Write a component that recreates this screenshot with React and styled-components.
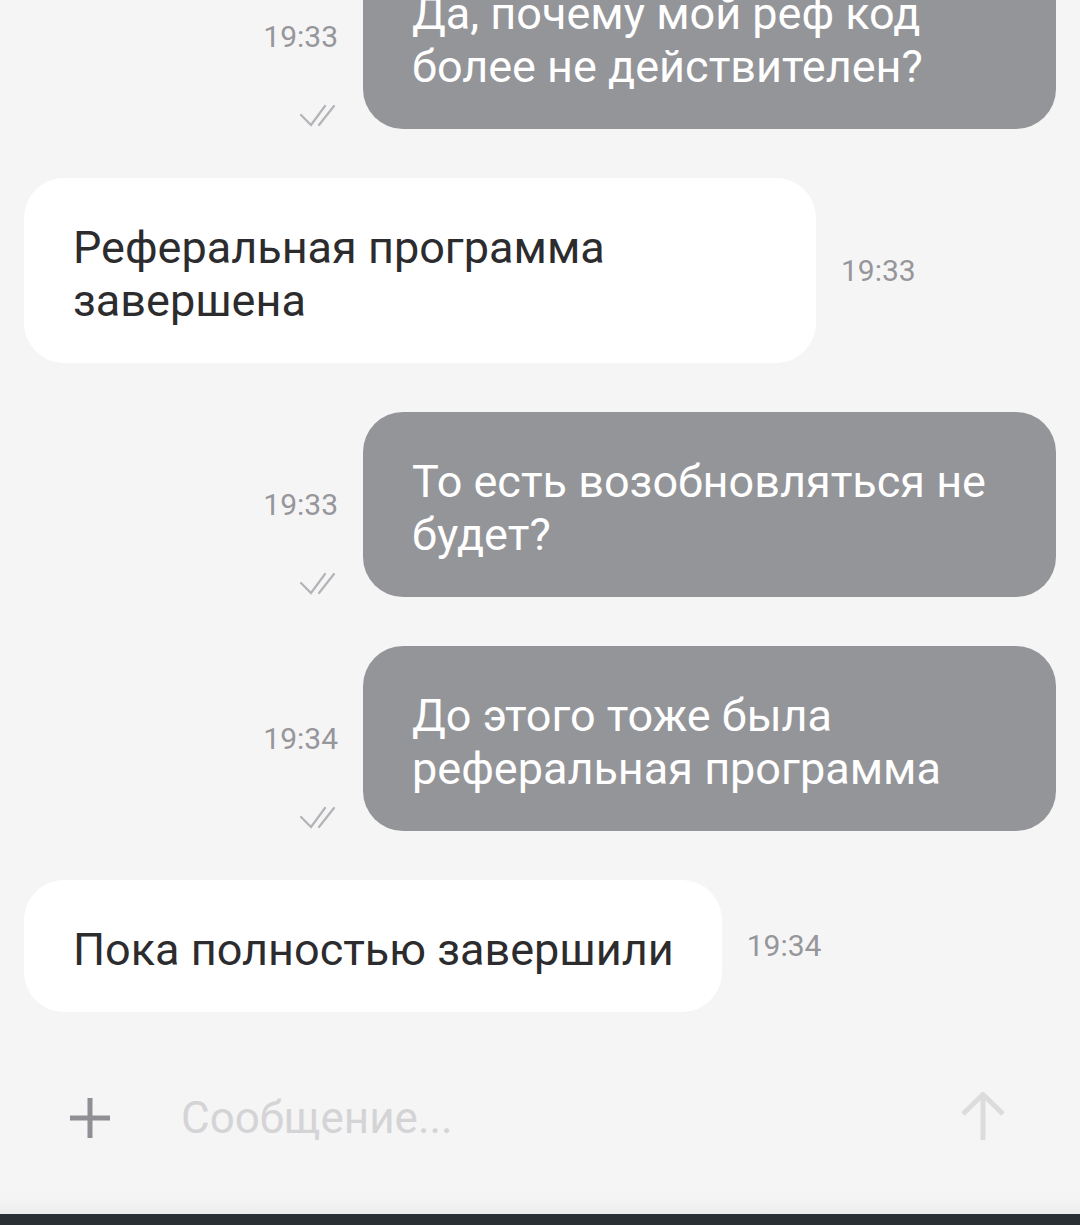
import React from 'react'
import styled, { createGlobalStyle } from 'styled-components'

const GlobalStyle = createGlobalStyle`
  html, body {
    margin: 0;
    padding: 0;
    background: #f5f5f5;
  }
  body {
    font-family: Roboto, "Noto Sans", sans-serif;
  }
`;

const messages = [
  { id: 1, out: true, time: '19:33', text: 'Да, почему мой реф код более не действителен?' },
  { id: 2, out: false, time: '19:33', text: 'Реферальная программа завершена' },
  { id: 3, out: true, time: '19:33', text: 'То есть возобновляться не будет?' },
  { id: 4, out: true, time: '19:34', text: 'До этого тоже была реферальная программа' },
  { id: 5, out: false, time: '19:34', text: 'Пока полностью завершили' },
];

const ReadMark = () => (
  <svg width="36" height="24" viewBox="0 0 36 24" fill="none" stroke="#b4b4b8" strokeWidth="2.2" strokeLinecap="round">
    <path d="M1 12 L11 22 L25 3" />
    <path d="M19 22 L34 3" />
  </svg>
)

const PlusIcon = () => (
  <svg width="40" height="40" viewBox="0 0 40 40">
    <rect x="0" y="17.5" width="40" height="5" fill="#909094" />
    <rect x="17.5" y="0" width="5" height="40" fill="#909094" />
  </svg>
)

const SendIcon = () => (
  <svg width="44" height="48" viewBox="0 0 44 48" fill="none" stroke="#dcdcdc" strokeWidth="5">
    <path d="M22 4 L22 48" />
    <path d="M2 22 L22 2.5 L42 22" strokeLinejoin="miter" />
  </svg>
)

const App = () => {
  return (
    <Screen>
      <GlobalStyle />
      <Feed>
        {messages.map((m) => (
          <Row key={m.id} $out={m.out}>
            {m.out ? (
              <>
                <Meta>
                  <Time>{m.time}</Time>
                  <Check><ReadMark /></Check>
                </Meta>
                <Bubble $out>{m.text}</Bubble>
              </>
            ) : (
              <>
                <Bubble>{m.text}</Bubble>
                <SideTime>{m.time}</SideTime>
              </>
            )}
          </Row>
        ))}
      </Feed>
      <Composer>
        <IconButton><PlusIcon /></IconButton>
        <Input placeholder="Сообщение..." />
        <SendButton><SendIcon /></SendButton>
      </Composer>
      <NavBar />
    </Screen>
  )
}

const Screen = styled.div`
  height: 100vh;
  display: flex;
  flex-direction: column;
  background: #f5f5f5;
  overflow: hidden;
`;

const Feed = styled.div`
  flex: 1;
  min-height: 0;
  overflow: hidden;
  display: flex;
  flex-direction: column;
  justify-content: flex-end;
  gap: 49px;
  padding: 0 24px;
`;

const Row = styled.div`
  display: flex;
  flex-shrink: 0;
  justify-content: ${(p) => (p.$out ? 'flex-end' : 'flex-start')};
  align-items: stretch;
  gap: 25px;
`;

const Bubble = styled.div`
  box-sizing: border-box;
  width: ${(p) => (p.$out ? '693px' : 'auto')};
  max-width: 792px;
  padding: 43px 48px 36px 49px;
  border-radius: 40px;
  background: ${(p) => (p.$out ? '#949599' : '#ffffff')};
  color: ${(p) => (p.$out ? '#ffffff' : '#2c2c2e')};
  font-size: 45px;
  line-height: 53px;
`;

const Meta = styled.div`
  display: grid;
  grid-template-rows: 1fr auto 1fr;
  justify-items: end;
  width: 76px;
`;

const Time = styled.div`
  grid-row: 2;
  font-size: 30px;
  line-height: 34px;
  color: #96969b;
`;

const SideTime = styled(Time)`
  align-self: center;
`;

const Check = styled.div`
  grid-row: 3;
  align-self: end;
  margin: 0 2px 2px 0;
  line-height: 0;
`;

const Composer = styled.div`
  flex-shrink: 0;
  height: 202px;
  box-sizing: border-box;
  padding: 10px 75px 0 70px;
  display: flex;
  align-items: center;
  gap: 71px;
  background: linear-gradient(to bottom, #f5f5f5 92%, #ececec 100%);
`;

const IconButton = styled.div`
  display: flex;
  line-height: 0;
`;

const Input = styled.input`
  flex: 1;
  border: none;
  outline: none;
  background: transparent;
  font-family: Roboto, "Noto Sans", sans-serif;
  font-size: 44px;
  color: #2c2c2e;
  padding: 0;

  &::placeholder {
    color: #d4d4d6;
  }
`;

const SendButton = styled.div`
  display: flex;
  line-height: 0;
  margin-bottom: 4px;
`;

const NavBar = styled.div`
  flex-shrink: 0;
  height: 11px;
  background: #2a2f33;
`;

export default App
